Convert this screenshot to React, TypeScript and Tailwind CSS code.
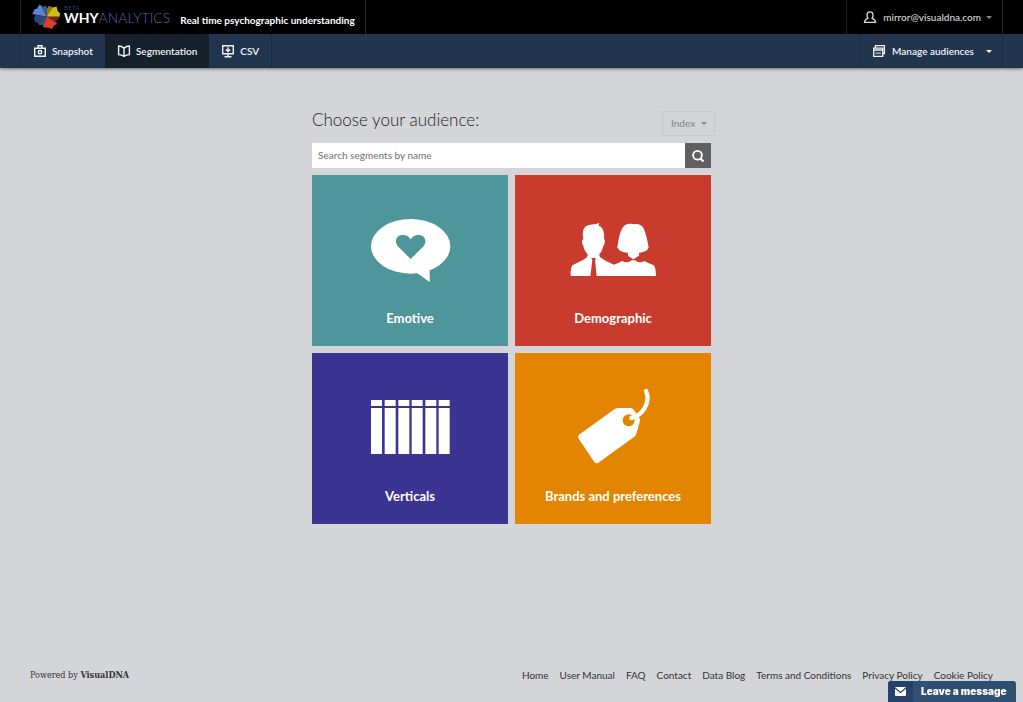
import React from "react";

function Caret({ className = "" }: { className?: string }) {
  return (
    <svg className={`h-[3px] w-[6px] shrink-0 ${className}`} viewBox="0 0 6 3" fill="currentColor" aria-hidden="true">
      <path d="M0 0h6L3 3z" />
    </svg>
  );
}

function LogoMark() {
  return (
    <svg className="h-[26px] w-7 shrink-0" viewBox="96 12 84 78" aria-hidden="true">
      <path d="M140 50 97 42 104 27 110 27 118 14 125 17Z" fill="#5c84cf" />
      <path d="M140 50 123 18 131 20 139 16 141 26Z" fill="#3d5a8c" />
      <path d="M140 50 141 26 146 18 157 21 163 29Z" fill="#8c8016" />
      <path d="M140 50 160 22 170 20 173 33 180 40 179 50Z" fill="#d4bd12" />
      <path d="M140 50 179 50 176 57 168 62 164 68Z" fill="#7d2218" />
      <path d="M140 50 173 71 163 76 156 87 146 83 129 82 131 70Z" fill="#d8402c" />
      <path d="M140 50 131 76 118 75 113 69 119 60Z" fill="#34507f" />
      <path d="M140 50 117 69 106 67 102 57 106 44Z" fill="#2b4678" />
    </svg>
  );
}

const iconBox = "h-[14px] w-[14px] shrink-0";

function CameraIcon() {
  return (
    <svg className={iconBox} viewBox="0 0 14 14" fill="none" stroke="currentColor" strokeWidth="1.4" aria-hidden="true">
      <path d="M1.7 4.2h10.6v8.1H1.7zM5 4V1.8h4V4" />
      <circle cx="7" cy="8.2" r="1.7" />
    </svg>
  );
}

function BookIcon() {
  return (
    <svg className={iconBox} viewBox="0 0 14 14" fill="none" stroke="currentColor" strokeWidth="1.4" aria-hidden="true">
      <path d="M7 4.2C5.600 2.800 3.600 2 1.600 2v8.600c2 0 4 .6 5.400 1.800 1.400-1.200 3.400-1.800 5.400-1.800V2C10.400 2 8.400 2.800 7 4.200zM7 4.200v8" />
    </svg>
  );
}

function ScreenIcon() {
  return (
    <svg className={iconBox} viewBox="0 0 14 14" fill="none" stroke="currentColor" strokeWidth="1.4" aria-hidden="true">
      <path d="M1.700 1.700h10.600v8.100H1.700zM3.500 12.700h7M7 9.800v2.800" />
      <path d="M7 3.200v4M4.800 5.600 7 7.600 9.200 5.600" />
    </svg>
  );
}

function WindowsIcon() {
  return (
    <svg className={iconBox} viewBox="0 0 14 14" fill="none" stroke="currentColor" strokeWidth="1.300" aria-hidden="true">
      <path d="M3.400 3.600V1.700h9v7.800h-1.600M1.700 4.100h9v8.300h-9zM1.700 6h9" />
      <path d="M3.500 9.200h5.400" strokeWidth="1.800" opacity=".6" />
    </svg>
  );
}

function UserIcon() {
  return (
    <svg className={iconBox} viewBox="0 0 14 14" fill="none" stroke="currentColor" strokeWidth="1.300" aria-hidden="true">
      <path d="M4.900 8.300C3.900 6.900 3.900 5.600 4 4.300 4.200 2.700 5.400 1.900 7 1.900s2.800.8 3 2.400c.1 1.300.1 2.600-.9 4 1.700.5 3.200 1.300 3.400 4H1.500c.2-2.700 1.700-3.500 3.400-4z" />
    </svg>
  );
}

const art = "h-20 w-[100px]";

function EmotiveArt() {
  return (
    <svg className={art} viewBox="0 12 300 240" aria-hidden="true">
      <ellipse cx="152" cy="124" rx="119" ry="82" fill="#fff" />
      <path d="M168 202 209 231V188z" fill="#fff" />
      <path d="M152 162 115 125C105 114 106 101 115 94 126 86 145 89 152 103 159 89 178 86 189 94 198 101 199 114 189 125Z" fill="#4f959c" />
    </svg>
  );
}

function DemographicArt() {
  return (
    <svg className={art} viewBox="24 12 300 240" fill="#fff" aria-hidden="true">
      <path d="M47 213C47 196 48 184 54 180 66 172 84 166 94 158 97 155 98 152 98 148 90 139 86 130 85 122 81 118 80 112 82 104L85 103C80 76 87 63 102 60 115 57 124 59 133 53L131 62C143 66 149 79 147 103L149 104C150 112 149 118 145 122 143 133 139 141 133 148 133 153 134 156 139 159 149 166 162 173 177 179 185 176 194 172 202 168 210 173 220 174 232 164L235 167 238 164C250 174 260 173 268 168 276 173 288 177 296 181 301 184 302 198 303 213Z" />
      <path d="M109 159H123L120 166 125 213H106L112 166Z" fill="#c93b2c" />
      <path d="M235 58C248 54 261 59 266 70 274 90 277 105 281 127 278 137 270 141 252 144V152C246 157 240 158 235 163 230 158 224 157 219 152V144C201 141 192 138 187 127 191 105 192 89 202 69 208 59 222 54 235 58Z" />
    </svg>
  );
}

function VerticalsArt() {
  const books = [48, 89, 130, 170, 211, 251];
  return (
    <svg className={art} viewBox="15 6 300 240" fill="#fff" aria-hidden="true">
      {books.map((x) => (
        <g key={x}>
          <rect x={x} y="45" width="33" height="18" />
          <rect x={x} y="69" width="33" height="138" />
        </g>
      ))}
    </svg>
  );
}

function TagArt() {
  return (
    <svg className={art} viewBox="84 36 300 240" aria-hidden="true">
      <path d="M132 179 236 104Q242 99 249 99H286Q293 99 297 105L313 129Q316 134 314 141L304 176Q302 183 296 187L190 263Q183 267 178 261L131 191Q127 184 132 179Z" fill="#fff" />
      <circle cx="281" cy="136" r="18" fill="#e38500" />
      <path d="M289 129C302 127 321 115 329 99 339 82 341 66 333 48" fill="none" stroke="#fff" strokeWidth="13" strokeLinecap="round" />
    </svg>
  );
}

const tiles = [
  { label: "Emotive", color: "bg-[#4f959c]", Art: EmotiveArt },
  { label: "Demographic", color: "bg-[#c93b2c]", Art: DemographicArt },
  { label: "Verticals", color: "bg-[#3c3493]", Art: VerticalsArt },
  { label: "Brands and preferences", color: "bg-[#e38500]", Art: TagArt },
];

const footerLinks = ["Home", "User Manual", "FAQ", "Contact", "Data Blog", "Terms and Conditions", "Privacy Policy", "Cookie Policy"];

export default function App() {
  return (
    <div className="flex min-h-screen flex-col bg-[#d4d5d9] font-['Lato',sans-serif] text-[#333]">
      <header className="bg-black px-5">
        <div className="flex h-[34px] justify-between border-x border-[#222]">
          <div className="flex items-center border-r border-[#222] pr-[10px] pl-[11px]">
            <a href="#home" className="flex items-center gap-1">
              <LogoMark />
              <span className="flex flex-col pb-[5px]">
                <span className="h-[6px] text-[6px] leading-[6px] tracking-wider text-[#2c4270]">BETA</span>
                <span className="text-[14px] leading-[14px] text-[#4a69a8]">
                  <b className="font-bold text-white">WHY</b>
                  <span className="font-light">ANALYTICS</span>
                </span>
              </span>
            </a>
            <span className="pt-[6px] pl-[10px] text-[10px] leading-4 font-bold text-white">Real time psychographic understanding</span>
          </div>
          <button type="button" className="flex items-center border-l border-[#222] pr-[10px] pl-4 text-[10px] font-medium text-[#d8d8d8]">
            <UserIcon />
            <span className="pr-[5px] pl-[6px]">mirror@visualdna.com</span>
            <Caret className="text-[#888]" />
          </button>
        </div>
      </header>

      <nav className="bg-[#22354f] px-5 shadow-[0_1px_3px_rgba(0,0,0,0.5)]">
        <div className="flex h-[34px] justify-between border-x border-[#1b2c42] text-[10px] font-semibold text-[#f0f2f5]">
          <div className="flex">
            <a href="#snapshot" className="flex items-center gap-[5px] px-3">
              <CameraIcon />
              Snapshot
            </a>
            <a href="#segmentation" aria-current="page" className="flex items-center gap-[5px] bg-[#15202b] px-3">
              <BookIcon />
              Segmentation
            </a>
            <a href="#csv" className="flex items-center gap-[5px] border-r border-[#1b2c42] px-3">
              <ScreenIcon />
              CSV
            </a>
          </div>
          <button type="button" className="flex items-center border-l border-[#1b2c42] pr-[10px] pl-3">
            <WindowsIcon />
            <span className="pr-3 pl-[6px]">Manage audiences</span>
            <Caret />
          </button>
        </div>
      </nav>

      <main className="mx-auto w-full max-w-[399px] flex-1 pt-[43px]">
        <div className="flex h-8 items-start justify-between">
          <h1 className="text-[17px] leading-[18px] font-light text-[#222]">Choose your audience:</h1>
          <div className="relative -mr-1 text-[#888]">
            <select aria-label="Metric" className="block h-[25px] w-[53px] appearance-none border border-[#c8c9cd] bg-transparent pl-2 text-[10px] font-medium">
              <option>Index</option>
            </select>
            <Caret className="pointer-events-none absolute top-[11px] right-2" />
          </div>
        </div>
        <form className="flex h-[25px]" onSubmit={(e) => e.preventDefault()}>
          <input
            type="text"
            aria-label="Search segments by name"
            placeholder="Search segments by name"
            className="min-w-0 flex-1 bg-white px-[6px] text-[10px] font-medium outline-none placeholder:text-[#777]"
          />
          <button type="submit" aria-label="Search" className="flex w-[26px] items-center justify-center bg-[#606060] text-white">
            <svg className="h-[14px] w-[14px]" viewBox="0 0 14 14" fill="none" stroke="currentColor" strokeWidth="1.800" aria-hidden="true">
              <circle cx="6.500" cy="6.300" r="4.400" />
              <path d="M9.500 9.500 12.500 12.500" strokeWidth="2.200" />
            </svg>
          </button>
        </form>
        <div className="grid grid-cols-2 gap-[7px] pt-[7px]">
          {tiles.map(({ label, color, Art }) => (
            <button key={label} type="button" className={`flex h-[171px] flex-col items-center pt-[34px] text-white ${color}`}>
              <Art />
              <span className="pt-5 text-[13px] leading-[18px] font-bold">{label}</span>
            </button>
          ))}
        </div>
      </main>

      <footer className="flex items-center justify-between px-[30px] pb-[19px] text-[10px] leading-4">
        <p className="font-['DejaVu_Serif_Condensed','DejaVu_Serif',serif] text-[9px]">
          Powered by <b>VisualDNA</b>
        </p>
        <nav aria-label="Footer" className="flex gap-[11px]">
          {footerLinks.map((link) => (
            <a key={link} href="#footer">
              {link}
            </a>
          ))}
        </nav>
      </footer>

      <button
        type="button"
        className="fixed right-[7px] bottom-0 flex h-[21px] w-32 overflow-hidden rounded-t-[3px] bg-[#314f73] text-[10px] font-black text-white"
      >
        <span className="flex h-full w-[25px] items-center justify-center bg-[#24426a]">
          <svg className="h-[9px] w-[11px]" viewBox="0 0 11 9" aria-hidden="true">
            <rect width="11" height="9" rx="1" fill="#fff" />
            <path d="M0 1 5.500 5.500 11 1" fill="none" stroke="#24426a" strokeWidth="1.300" />
          </svg>
        </span>
        <span className="flex h-full flex-1 items-center pl-2 font-['Inter',sans-serif]">Leave a message</span>
      </button>
    </div>
  );
}
